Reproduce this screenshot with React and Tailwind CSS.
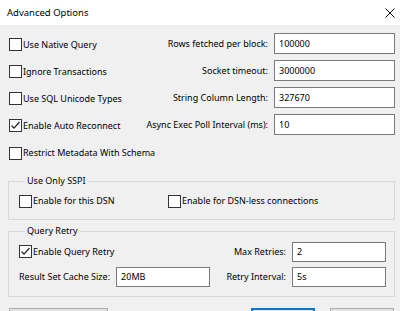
import React from "react";

function Check({ checked }) {
  return (
    <span className="relative inline-block w-[13px] h-[13px] shrink-0 border border-[#333333] bg-white">
      {checked && (
        <svg viewBox="0 0 13 13" className="absolute left-[-1px] top-[-1px] w-[13px] h-[13px]">
          <path d="M2.5 6.5 L5 9.2 L10.5 3" fill="none" stroke="#222" strokeWidth="1.2" />
        </svg>
      )}
    </span>
  );
}

function CB({ label, checked, className = "" }) {
  return (
    <label className={`flex items-center gap-[1px] ${className}`}>
      <Check checked={checked} />
      <span className="whitespace-nowrap">{label}</span>
    </label>
  );
}

function Field({ label, value, w = "w-[121px] h-[21px]" }) {
  return (
    <div className="flex items-center gap-[6px]">
      <span className="whitespace-nowrap">{label}</span>
      <div className={`${w} shrink-0 border border-[#7a7a7a] bg-white flex items-center pl-[4px]`}>
        {value}
      </div>
    </div>
  );
}

export default function App() {
  return (
    <div
      className="w-[400px] h-[311px] overflow-hidden bg-[#f0f0f0] text-[9px] leading-[12px] text-black"
      style={{ fontFamily: '"Noto Sans", sans-serif' }}
    >
      <div className="h-[25px] bg-white flex items-center justify-between pl-[7px] pr-[4px]">
        <span className="text-[9.5px]">Advanced Options</span>
        <svg viewBox="0 0 10 10" className="w-[10px] h-[10px] mr-[1px]">
          <path d="M0.5 0.5 L9.5 9.5 M9.5 0.5 L0.5 9.5" stroke="#111" strokeWidth="1" />
        </svg>
      </div>
      <div className="pl-[8px] pr-[5px] pt-[8px]">
        <div className="flex flex-col pl-[1px]">
          <div className="h-[27px] flex items-start justify-between">
            <CB label="Use Native Query" className="mt-[5px]" />
            <Field label="Rows fetched per block:" value="100000" />
          </div>
          <div className="h-[27px] flex items-start justify-between">
            <CB label="Ignore Transactions" className="mt-[5px]" />
            <Field label="Socket timeout:" value="3000000" />
          </div>
          <div className="h-[27px] flex items-start justify-between">
            <CB label="Use SQL Unicode Types" className="mt-[5px]" />
            <Field label="String Column Length:" value="327670" />
          </div>
          <div className="h-[27px] flex items-start justify-between">
            <CB label="Enable Auto Reconnect" checked className="mt-[5px]" />
            <Field label="Async Exec Poll Interval (ms):" value="10" />
          </div>
          <div className="h-[24px] flex items-center">
            <CB label="Restrict Metadata With Schema" />
          </div>
        </div>

        <fieldset className="mt-[8px] border border-[#d9d9d9] pl-[10px] pr-[8px] pb-[6px]">
          <legend className="ml-[6px] px-[2px] leading-[16px]">Use Only SSPI</legend>
          <div className="h-[24px] flex items-center">
            <CB label="Enable for this DSN" className="w-[149px]" />
            <CB label="Enable for DSN-less connections" />
          </div>
        </fieldset>

        <fieldset className="mt-[3px] border border-[#d9d9d9] pl-[10px] pr-[8px] pb-[7px]">
          <legend className="ml-[6px] px-[2px] leading-[16px]">Query Retry</legend>
          <div className="h-[25px] flex items-center justify-between">
            <CB label="Enable Query Retry" checked />
            <Field label="Max Retries:" value="2" w="w-[94px] h-[20px]" />
          </div>
          <div className="h-[25px] flex items-center justify-between">
            <Field label="Result Set Cache Size:" value="20MB" w="w-[94px] h-[20px]" />
            <Field label="Retry Interval:" value="5s" w="w-[94px] h-[20px]" />
          </div>
        </fieldset>

        <div className="mt-[11px] flex items-start pl-[1px] pr-[1px]">
          <button className="w-[99px] h-[23px] bg-[#e1e1e1] border border-[#adadad]" aria-label="Temporary Files" />
          <div className="flex-1" />
          <button className="w-[64px] h-[23px] bg-[#e1e1e1] border-2 border-[#0078d7]" aria-label="OK" />
          <button className="ml-[15px] w-[64px] h-[23px] bg-[#e1e1e1] border border-[#adadad]" aria-label="Cancel" />
        </div>
      </div>
    </div>
  );
}
